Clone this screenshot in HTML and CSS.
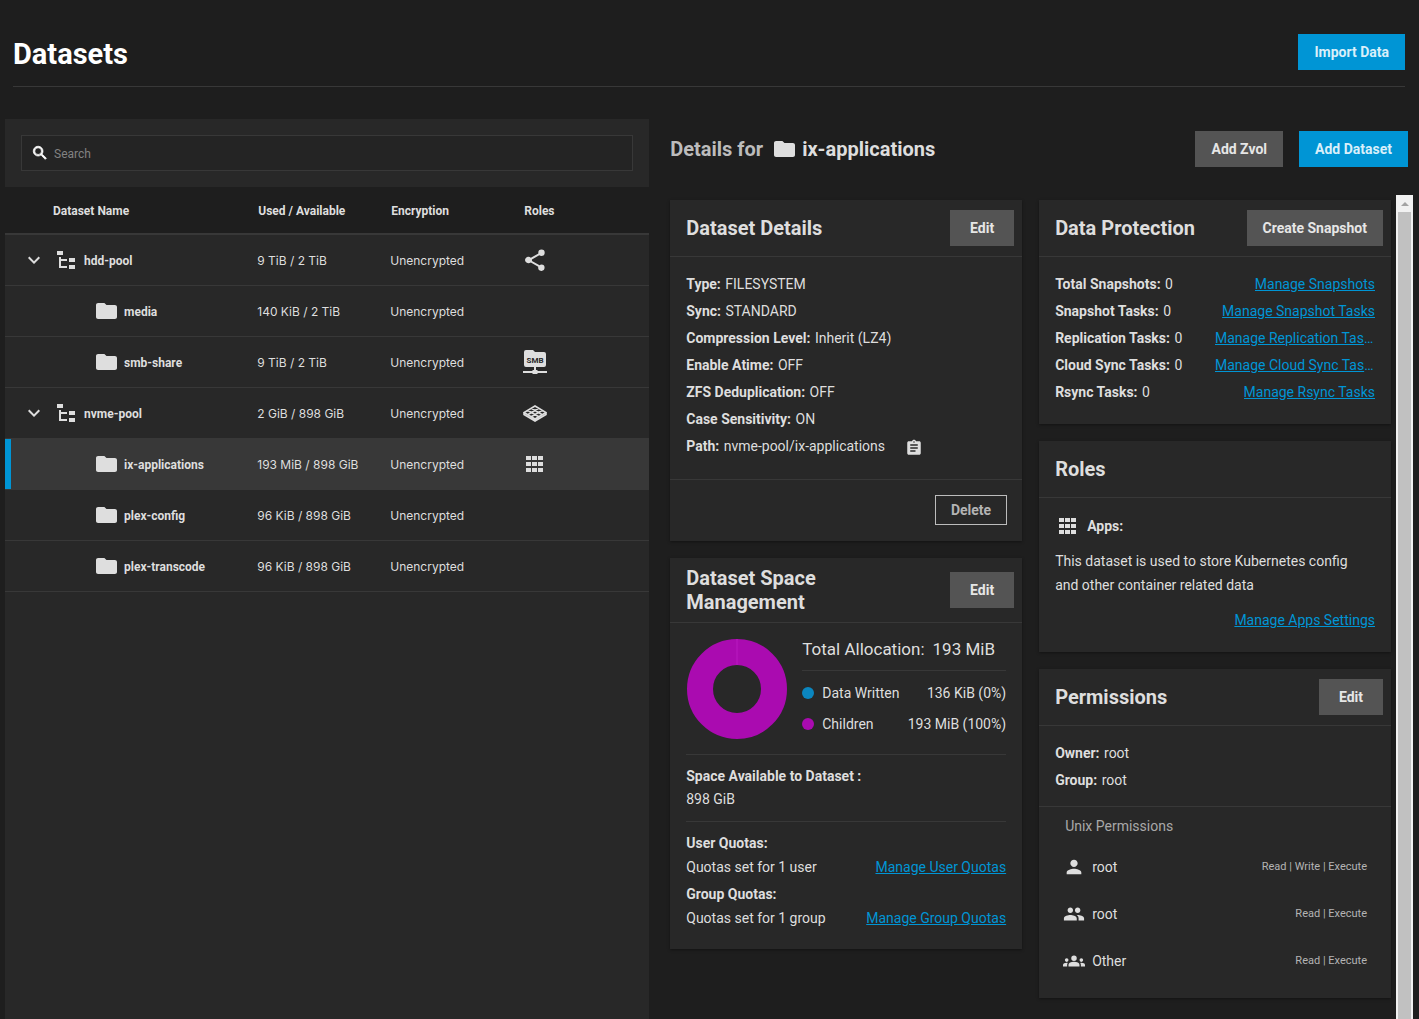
FILE: index.html
```html
<!DOCTYPE html>
<html lang="en">
<head>
    <meta charset="UTF-8">
    <meta name="viewport" content="width=device-width, initial-scale=1.0">
    <title>Datasets</title>
    <link rel="stylesheet" href="styles.css">
</head>
<body>
    <!-- shared icons -->
    <svg class="sprite" aria-hidden="true">
        <symbol id="folder" viewBox="2 4 20 16" preserveAspectRatio="none">
            <path d="M10 4H4c-1.100 0-2 .9-2 2v12c0 1.100.9 2 2 2h16c1.100 0 2-.9 2-2V8c0-1.100-.9-2-2-2h-8z"/>
        </symbol>
        <symbol id="pool" viewBox="0 0 18 18">
            <path d="M0 0h6v4H0zM12 7h6v4h-6zM12 14h6v4h-6zM2 6h2v2h6v2H4v5h6v2H2z"/>
        </symbol>
        <symbol id="chevron" viewBox="0 0 24 24">
            <path d="M7.410 8.590 12 13.170l4.590-4.580L18 10l-6 6-6-6z"/>
        </symbol>
        <symbol id="apps" viewBox="0 0 18 16">
            <path d="M0 0h5v4H0zM6 0h5v4H6zM12 0h5v4h-5zM0 6h5v4H0zM6 6h5v4H6zM12 6h5v4h-5zM0 12h5v4H0zM6 12h5v4H6zM12 12h5v4h-5z"/>
        </symbol>
    </svg>

    <div class="page">
        <header class="page-header">
            <h1>Datasets</h1>
            <button type="button" class="btn primary">Import Data</button>
        </header>

        <main class="main">
            <section class="tree">
                <div class="search">
                    <label class="search-box">
                        <svg viewBox="0 0 24 24" aria-hidden="true"><path d="M15.500 14h-.79l-.28-.27A6.470 6.470 0 0 0 16 9.500 6.500 6.500 0 1 0 9.500 16c1.610 0 3.090-.59 4.230-1.570l.27.28v.79l5 4.990L20.490 19zm-6 0a4.500 4.500 0 1 1 0-9 4.500 4.500 0 0 1 0 9z"/></svg>
                        <input type="text" placeholder="Search" aria-label="Search">
                    </label>
                </div>

                <table>
                    <thead>
                        <tr>
                            <th class="name-col">Dataset Name</th>
                            <th class="used-col">Used / Available</th>
                            <th class="enc-col">Encryption</th>
                            <th class="roles-col">Roles</th>
                        </tr>
                    </thead>
                    <tbody>
                        <tr>
                            <td><div class="name"><svg class="chevron"><use href="#chevron"/></svg><svg class="pool"><use href="#pool"/></svg><span>hdd-pool</span></div></td>
                            <td>9 TiB / 2 TiB</td>
                            <td>Unencrypted</td>
                            <td>
                                <svg class="role" viewBox="0 0 24 24"><path d="M18.500 16.500c-.76 0-1.440.3-1.960.77L8.910 12.900c.05-.23.09-.46.09-.7s-.04-.47-.09-.7l7.350-4.300c.54.5 1.450.81 2.240.81a3.200 3.200 0 1 0-3.200-3.200c0 .24.04.47.09.7L7.840 9.810A3.300 3.300 0 1 0 5.500 15.300c.79 0 1.700-.31 2.340-.81l7.420 4.360c-.05.21-.08.43-.08.65a3.200 3.200 0 1 0 3.320-3z"/></svg>
                            </td>
                        </tr>
                        <tr>
                            <td><div class="name child"><svg class="folder"><use href="#folder"/></svg><span>media</span></div></td>
                            <td>140 KiB / 2 TiB</td>
                            <td>Unencrypted</td>
                            <td></td>
                        </tr>
                        <tr>
                            <td><div class="name child"><svg class="folder"><use href="#folder"/></svg><span>smb-share</span></div></td>
                            <td>9 TiB / 2 TiB</td>
                            <td>Unencrypted</td>
                            <td>
                                <svg class="role" viewBox="0 0 24 24">
                                    <path d="M3 0h7l2 2h9a2 2 0 0 1 2 2v11a2 2 0 0 1-2 2h-8v3h1l1 1h9v2h-9l-1 1h-4l-1-1H0v-2h9l1-1h1v-3H3a2 2 0 0 1-2-2V2a2 2 0 0 1 2-2z"/>
                                    <text class="smb" x="12" y="13" text-anchor="middle">SMB</text>
                                </svg>
                            </td>
                        </tr>
                        <tr>
                            <td><div class="name"><svg class="chevron"><use href="#chevron"/></svg><svg class="pool"><use href="#pool"/></svg><span>nvme-pool</span></div></td>
                            <td>2 GiB / 898 GiB</td>
                            <td>Unencrypted</td>
                            <td>
                                <svg class="role truenas" viewBox="0 0 24 24">
                                    <path d="M12 5 23 11.500 12 18 1 11.500zM8.300 7.200 19.300 13.700M4.700 9.300 15.700 15.800M15.700 7.200 4.700 13.700M19.300 9.300 8.300 15.800M1 11.500v2L12 20l11-6.500v-2M12 18v2"/>
                                </svg>
                            </td>
                        </tr>
                        <tr class="selected">
                            <td><div class="name child"><svg class="folder"><use href="#folder"/></svg><span>ix-applications</span></div></td>
                            <td>193 MiB / 898 GiB</td>
                            <td>Unencrypted</td>
                            <td><svg class="apps"><use href="#apps"/></svg></td>
                        </tr>
                        <tr>
                            <td><div class="name child"><svg class="folder"><use href="#folder"/></svg><span>plex-config</span></div></td>
                            <td>96 KiB / 898 GiB</td>
                            <td>Unencrypted</td>
                            <td></td>
                        </tr>
                        <tr>
                            <td><div class="name child"><svg class="folder"><use href="#folder"/></svg><span>plex-transcode</span></div></td>
                            <td>96 KiB / 898 GiB</td>
                            <td>Unencrypted</td>
                            <td></td>
                        </tr>
                    </tbody>
                </table>
            </section>

            <section class="details">
                <div class="details-header">
                    <h2><span class="muted">Details for</span><svg class="folder"><use href="#folder"/></svg>ix-applications</h2>
                    <div class="actions">
                        <button type="button" class="btn">Add Zvol</button>
                        <button type="button" class="btn primary">Add Dataset</button>
                    </div>
                </div>

                <div class="scroll-area">
                    <div class="cards">
                        <div class="column">
                            <article class="card">
                                <div class="card-header">
                                    <h3>Dataset Details</h3>
                                    <button type="button" class="btn edit">Edit</button>
                                </div>
                                <div class="card-body props">
                                    <div class="row"><div><b>Type:</b> FILESYSTEM</div></div>
                                    <div class="row"><div><b>Sync:</b> STANDARD</div></div>
                                    <div class="row"><div><b>Compression Level:</b> Inherit (LZ4)</div></div>
                                    <div class="row"><div><b>Enable Atime:</b> OFF</div></div>
                                    <div class="row"><div><b>ZFS Deduplication:</b> OFF</div></div>
                                    <div class="row"><div><b>Case Sensitivity:</b> ON</div></div>
                                    <div class="row path">
                                        <div><b>Path:</b> nvme-pool/ix-applications</div>
                                        <button type="button" class="copy" aria-label="Copy path">
                                            <svg viewBox="0 0 24 24"><path d="M19 3h-4.180C14.400 1.840 13.300 1 12 1s-2.400.84-2.820 2H5c-1.100 0-2 .9-2 2v14c0 1.100.9 2 2 2h14c1.100 0 2-.9 2-2V5c0-1.100-.9-2-2-2zm-7 0c.55 0 1 .45 1 1s-.45 1-1 1-1-.45-1-1 .45-1 1-1zm2 14H7v-2h7zm3-4H7v-2h10zm0-4H7V7h10z"/></svg>
                                        </button>
                                    </div>
                                </div>
                                <div class="card-footer">
                                    <button type="button" class="btn-outline">Delete</button>
                                </div>
                            </article>

                            <article class="card">
                                <div class="card-header">
                                    <h3>Dataset Space Management</h3>
                                    <button type="button" class="btn edit">Edit</button>
                                </div>
                                <div class="space">
                                    <div class="allocation">
                                        <svg class="donut" viewBox="0 0 100 100" aria-hidden="true">
                                            <circle cx="50" cy="50" r="37"/>
                                            <path d="M50 0v26"/>
                                        </svg>
                                        <div class="legend">
                                            <h4>Total Allocation:<span>193 MiB</span></h4>
                                            <div class="legend-row"><i class="dot written"></i>Data Written<span>136 KiB (0%)</span></div>
                                            <div class="legend-row"><i class="dot children"></i>Children<span>193 MiB (100%)</span></div>
                                        </div>
                                    </div>
                                    <div class="available">
                                        <b>Space Available to Dataset :</b>
                                        <div>898 GiB</div>
                                    </div>
                                    <div class="quotas">
                                        <div class="quota">
                                            <b>User Quotas:</b>
                                            <div class="quota-row">Quotas set for 1 user <a href="#">Manage User Quotas</a></div>
                                        </div>
                                        <div class="quota">
                                            <b>Group Quotas:</b>
                                            <div class="quota-row">Quotas set for 1 group <a href="#">Manage Group Quotas</a></div>
                                        </div>
                                    </div>
                                </div>
                            </article>
                        </div>

                        <div class="column">
                            <article class="card">
                                <div class="card-header">
                                    <h3>Data Protection</h3>
                                    <button type="button" class="btn">Create Snapshot</button>
                                </div>
                                <div class="card-body">
                                    <div class="row"><div><b>Total Snapshots:</b> 0</div><a href="#">Manage Snapshots</a></div>
                                    <div class="row"><div><b>Snapshot Tasks:</b> 0</div><a href="#">Manage Snapshot Tasks</a></div>
                                    <div class="row"><div><b>Replication Tasks:</b> 0</div><a href="#">Manage Replication Tasks</a></div>
                                    <div class="row"><div><b>Cloud Sync Tasks:</b> 0</div><a href="#">Manage Cloud Sync Tasks</a></div>
                                    <div class="row"><div><b>Rsync Tasks:</b> 0</div><a href="#">Manage Rsync Tasks</a></div>
                                </div>
                            </article>

                            <article class="card">
                                <div class="card-header">
                                    <h3>Roles</h3>
                                </div>
                                <div class="card-body roles">
                                    <div class="role-name"><svg class="apps"><use href="#apps"/></svg><b>Apps:</b></div>
                                    <p>This dataset is used to store Kubernetes config and other container related data</p>
                                    <a href="#">Manage Apps Settings</a>
                                </div>
                            </article>

                            <article class="card">
                                <div class="card-header">
                                    <h3>Permissions</h3>
                                    <button type="button" class="btn edit">Edit</button>
                                </div>
                                <div class="card-body owner">
                                    <div class="row"><div><b>Owner:</b> root</div></div>
                                    <div class="row"><div><b>Group:</b> root</div></div>
                                </div>
                                <div class="unix">
                                    <h5>Unix Permissions</h5>
                                    <div class="perm">
                                        <svg viewBox="0 0 24 24"><path d="M12 12c2.210 0 4-1.790 4-4s-1.790-4-4-4-4 1.790-4 4 1.790 4 4 4zm0 2c-2.670 0-8 1.340-8 4v2h16v-2c0-2.660-5.330-4-8-4z"/></svg>
                                        root<span>Read | Write | Execute</span>
                                    </div>
                                    <div class="perm">
                                        <svg viewBox="0 0 24 24"><path d="M16 11c1.660 0 2.990-1.340 2.990-3S17.660 5 16 5s-3 1.340-3 3 1.340 3 3 3zm-8 0c1.660 0 2.990-1.340 2.990-3S9.660 5 8 5 5 6.340 5 8s1.340 3 3 3zm0 2c-2.330 0-7 1.170-7 3.500V19h14v-2.500C15 14.170 10.330 13 8 13zm8 0c-.29 0-.62.02-.97.05 1.160.84 1.970 1.970 1.970 3.450V19h6v-2.500c0-2.330-4.670-3.500-7-3.500z"/></svg>
                                        root<span>Read | Execute</span>
                                    </div>
                                    <div class="perm">
                                        <svg viewBox="0 0 24 24"><path d="M12 12.750c1.630 0 3.070.39 4.240.9 1.080.48 1.760 1.560 1.760 2.730V18H6v-1.610c0-1.180.68-2.260 1.760-2.730 1.170-.52 2.610-.91 4.240-.91zM4 13a2 2 0 1 0 0-4 2 2 0 0 0 0 4zm1.130 1.100C4.760 14.040 4.390 14 4 14c-.99 0-1.930.21-2.780.58A2.010 2.010 0 0 0 0 16.430V18h4.500v-1.610c0-.83.23-1.610.63-2.290zM20 13a2 2 0 1 0 0-4 2 2 0 0 0 0 4zm4 3.430c0-.81-.48-1.530-1.220-1.850A6.950 6.950 0 0 0 20 14c-.39 0-.76.04-1.130.1.4.68.63 1.460.63 2.290V18H24zM12 6a3 3 0 1 1 0 6 3 3 0 0 1 0-6z"/></svg>
                                        Other<span>Read | Execute</span>
                                    </div>
                                </div>
                            </article>
                        </div>
                    </div>
                    <div class="scrollbar" aria-hidden="true"><div class="arrow"></div><div class="thumb"></div></div>
                </div>
            </section>
        </main>
    </div>
</body>
</html>
```
FILE: styles.css
```css
* {
    box-sizing: border-box;
}
body {
    margin: 0;
    background-color: #1e1e1e;
    color: #dedede;
    font-family: Roboto, Arial, sans-serif;
    font-size: 14px;
}
h1, h2, h3, h4, h5, p {
    margin: 0;
}
svg {
    fill: #dedede;
    flex-shrink: 0;
}
a {
    color: #0095d5;
}
button, input {
    font-family: inherit;
}
.sprite {
    display: none;
}
.page {
    display: flex;
    flex-direction: column;
    height: 100vh;
    overflow: hidden;
}
.page-header {
    display: flex;
    justify-content: space-between;
    align-items: center;
    margin: 0 14px 32px 13px;
    padding: 34px 0 16px;
    border-bottom: 1px solid #383838;
}
.page-header h1 {
    padding-top: 4px;
    color: #fff;
    font-size: 29px;
    line-height: 32px;
}
.btn {
    height: 36px;
    padding: 0 16px;
    border: none;
    background-color: #545454;
    color: #e6e6e6;
    font-size: 14px;
    font-weight: bold;
    white-space: nowrap;
    cursor: pointer;
}
.btn.primary {
    background-color: #0095d5;
    color: #d9effa;
}
.btn.edit {
    min-width: 64px;
}
.main {
    display: grid;
    grid-template-columns: minmax(0, 37fr) minmax(0, 43fr);
    gap: 21px;
    flex: 1;
    min-height: 0;
    padding-left: 5px;
}

/* dataset tree */
.tree {
    background-color: #282828;
}
.search {
    padding: 16px;
}
.search-box {
    display: flex;
    align-items: center;
    gap: 5px;
    height: 36px;
    padding: 0 9px;
    border: 1px solid #383838;
    background-color: #242424;
}
.search-box svg {
    width: 18px;
    height: 18px;
    fill: #fff;
    stroke: #fff;
}
.search-box input {
    flex: 1;
    padding: 2px 0 0;
    border: none;
    outline: none;
    background: none;
    color: #dedede;
    font-size: 12px;
}
.search-box input::placeholder {
    color: #828282;
}
table {
    width: 100%;
    table-layout: fixed;
    border-collapse: separate;
    border-spacing: 0;
    font-size: 12px;
}
th {
    height: 48px;
    padding: 2px 1px 0;
    border-bottom: 2px solid #383838;
    background-color: #1e1e1e;
    text-align: left;
}
.name-col {
    padding-left: 48px;
}
.used-col, .enc-col {
    width: 133px;
}
.roles-col {
    width: 126px;
}
td {
    height: 51px;
    padding: 0;
    border-bottom: 1px solid #383838;
    font-family: Inter, Arial, sans-serif;
}
td svg {
    display: block;
}
.selected td {
    background-color: #383838;
}
.selected td:first-child {
    box-shadow: inset 6px 0 #0095d5;
}
.name {
    display: flex;
    align-items: center;
    padding-left: 17px;
    font-family: Roboto, Arial, sans-serif;
    font-weight: bold;
}
.name span {
    padding-top: 2px;
}
.name.child {
    padding-left: 91px;
}
.chevron {
    width: 24px;
    height: 24px;
    margin-right: 11px;
}
.pool {
    width: 18px;
    height: 18px;
    margin-right: 9px;
}
.folder {
    width: 21px;
    height: 16px;
    margin-right: 7px;
}
.role {
    width: 24px;
    height: 24px;
}
.smb {
    fill: #282828;
    font-family: Roboto, Arial, sans-serif;
    font-size: 8px;
    font-weight: bold;
}
.truenas {
    fill: none;
    stroke: #dedede;
    stroke-width: 1.6px;
}
.apps {
    width: 18px;
    height: 16px;
}
td .apps {
    margin-left: 3px;
}

/* details panel */
.details {
    display: flex;
    flex-direction: column;
    min-height: 0;
}
.details-header {
    display: flex;
    justify-content: space-between;
    align-items: center;
    padding: 12px 11px 28px 0;
}
.details-header h2 {
    display: flex;
    align-items: center;
    font-size: 20px;
}
.muted {
    margin-right: 11px;
    color: #bcbcbc;
}
.actions {
    display: flex;
    gap: 16px;
}
.scroll-area {
    display: flex;
    gap: 5px;
    flex: 1;
    min-height: 0;
    padding-right: 6px;
}
.cards {
    display: grid;
    grid-template-columns: minmax(0, 1fr) minmax(0, 1fr);
    gap: 17px;
    flex: 1;
    padding-top: 5px;
}
.column {
    display: flex;
    flex-direction: column;
    gap: 17px;
}
.scrollbar {
    width: 17px;
    background-color: #f1f1f1;
}
.scrollbar .arrow {
    height: 17px;
    background-color: #f1f1f1;
}
.scrollbar .arrow::before {
    content: "";
    display: block;
    width: 0;
    margin: 0 auto;
    padding-top: 7px;
    border: 4px solid transparent;
    border-top: none;
    border-bottom-color: #a3a3a3;
}
.scrollbar .thumb {
    height: 100%;
    margin: 0 2px;
    background-color: #c1c1c1;
}

/* cards */
.card {
    background-color: #282828;
    box-shadow: 0 1px 3px rgba(0, 0, 0, 0.4);
}
.card-header {
    display: flex;
    justify-content: space-between;
    align-items: center;
    min-height: 57px;
    padding: 8px 8px 8px 16px;
    border-bottom: 1px solid #383838;
}
.card-header h3 {
    max-width: 180px;
    font-size: 20px;
    line-height: 24px;
}
.card-body {
    padding: 14px 16px 18px;
}
.card-body.props {
    padding-bottom: 19px;
}
.row {
    display: flex;
    justify-content: space-between;
    gap: 32px;
    line-height: 27px;
}
.row > div {
    white-space: nowrap;
}
.row b {
    margin-right: 1px;
}
.row a {
    max-width: 160px;
    overflow: hidden;
    text-overflow: ellipsis;
    white-space: nowrap;
}
.row.path {
    justify-content: flex-start;
    align-items: center;
    gap: 20px;
}
.copy {
    display: flex;
    padding: 2px 0 0;
    border: none;
    background: none;
    cursor: pointer;
}
.copy svg {
    width: 18px;
    height: 18px;
}
.card-footer {
    display: flex;
    justify-content: flex-end;
    padding: 15px 15px 16px;
    border-top: 1px solid #383838;
}
.btn-outline {
    height: 30px;
    padding: 0 15px;
    border: 1px solid #bcbcbc;
    background: none;
    color: #b4b4b4;
    font-size: 14px;
    font-weight: bold;
    cursor: pointer;
}

/* space management */
.space {
    padding: 16px 16px 19px;
}
.allocation {
    display: flex;
    gap: 15px;
    padding: 0 0 15px 1px;
    border-bottom: 1px solid #383838;
}
.donut {
    width: 100px;
    height: 100px;
}
.donut circle {
    fill: none;
    stroke: #aa0bb0;
    stroke-width: 26px;
}
.donut path {
    stroke: #b91ac0;
    stroke-width: 1px;
}
.legend {
    flex: 1;
}
.legend h4 {
    margin-bottom: 6px;
    padding-bottom: 11px;
    border-bottom: 1px solid #383838;
    font-size: 17px;
    font-weight: normal;
    line-height: 20px;
}
.legend h4 span {
    margin-left: 8px;
}
.legend-row {
    display: flex;
    align-items: center;
    height: 31px;
}
.legend-row span {
    margin-left: auto;
}
.dot {
    width: 12px;
    height: 12px;
    margin-right: 8px;
    border-radius: 50%;
}
.dot.written {
    background-color: #0b86bf;
}
.dot.children {
    background-color: #aa0bb0;
}
.available {
    padding: 10px 0;
    border-bottom: 1px solid #383838;
    line-height: 23px;
}
.quotas {
    display: flex;
    flex-direction: column;
    gap: 4px;
    padding-top: 10px;
    line-height: 23px;
}
.quota-row {
    display: flex;
    justify-content: space-between;
    line-height: 24px;
}

/* roles */
.roles {
    padding-bottom: 20px;
    line-height: 24px;
}
.roles p {
    max-width: 300px;
}
.role-name {
    display: flex;
    align-items: center;
    gap: 10px;
    height: 28px;
    margin-bottom: 9px;
    padding-left: 4px;
}
.roles > a {
    display: block;
    width: fit-content;
    margin: 11px 0 0 auto;
}

/* permissions */
.owner {
    padding-bottom: 12px;
}
.unix {
    padding: 7px 24px 14px;
    border-top: 1px solid #383838;
}
.unix h5 {
    margin: 0 2px 5px;
    color: #a8a8a8;
    font-size: 14px;
    font-weight: normal;
    line-height: 24px;
}
.perm {
    display: flex;
    align-items: center;
    height: 47px;
}
.perm svg {
    width: 22px;
    height: 22px;
    margin-right: 7px;
}
.perm span {
    margin-left: auto;
    color: #b4b4b4;
    font-size: 11px;
}
```
